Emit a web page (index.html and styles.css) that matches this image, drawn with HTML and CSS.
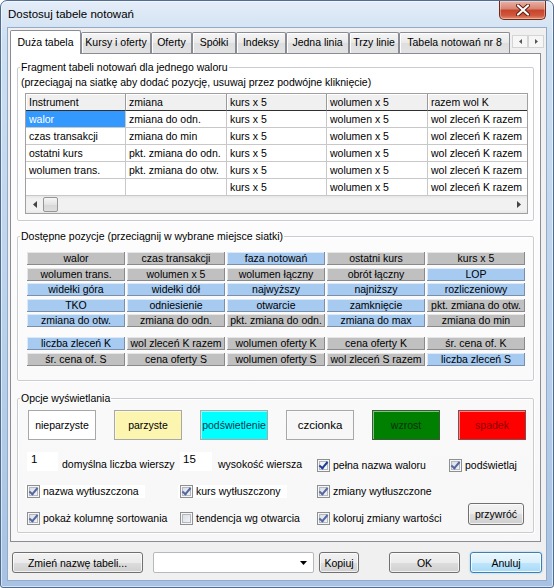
FILE: index.html
```html
<!DOCTYPE html>
<html lang="pl">
<head>
    <meta charset="UTF-8">
    <title>Dostosuj tabele notowań</title>
    <link rel="stylesheet" href="styles.css">
</head>
<body>
<div class="window">
    <div class="titlebar">
        <span class="title">Dostosuj tabele notowań</span>
        <div class="close-btn">
            <svg width="14" height="12" viewBox="0 0 14 12">
                <path d="M2 1.5 L12 10.5 M12 1.5 L2 10.5" stroke="#5a1a10" stroke-width="4" stroke-linecap="round"/>
                <path d="M2 1.5 L12 10.5 M12 1.5 L2 10.5" stroke="#fff" stroke-width="2.2" stroke-linecap="round"/>
            </svg>
        </div>
    </div>

    <div class="client">
        <div class="tabs">
            <div class="tab active">Duża tabela</div>
            <div class="tab">Kursy i oferty</div>
            <div class="tab">Oferty</div>
            <div class="tab">Spółki</div>
            <div class="tab">Indeksy</div>
            <div class="tab">Jedna linia</div>
            <div class="tab">Trzy linie</div>
            <div class="tab">Tabela notowań nr 8</div>
            <div class="tab-arrows">
                <span class="tab-arrow"><svg width="3" height="5" viewBox="0 0 3 5"><path d="M3 0 L0 2.5 L3 5Z" fill="#555"/></svg></span>
                <span class="tab-arrow"><svg width="3" height="5" viewBox="0 0 3 5"><path d="M0 0 L3 2.5 L0 5Z" fill="#555"/></svg></span>
            </div>
        </div>

        <div class="panel">
            <!-- podgląd tabeli -->
            <fieldset class="group">
                <legend>Fragment tabeli notowań dla jednego waloru</legend>
                <div class="group-body body-fragment">
                    <p class="hint">(przeciągaj na siatkę aby dodać pozycję, usuwaj przez podwójne kliknięcie)</p>
                    <div class="grid">
                        <div class="grid-row grid-head">
                            <div>Instrument</div><div>zmiana</div><div>kurs x 5</div><div>wolumen x 5</div><div>razem wol K</div>
                        </div>
                        <div class="grid-row">
                            <div class="sel">walor</div><div>zmiana do odn.</div><div>kurs x 5</div><div>wolumen x 5</div><div>wol zleceń K razem</div>
                        </div>
                        <div class="grid-row">
                            <div>czas transakcji</div><div>zmiana do min</div><div>kurs x 5</div><div>wolumen x 5</div><div>wol zleceń K razem</div>
                        </div>
                        <div class="grid-row">
                            <div>ostatni kurs</div><div>pkt. zmiana do odn.</div><div>kurs x 5</div><div>wolumen x 5</div><div>wol zleceń K razem</div>
                        </div>
                        <div class="grid-row">
                            <div>wolumen trans.</div><div>pkt. zmiana do otw.</div><div>kurs x 5</div><div>wolumen x 5</div><div>wol zleceń K razem</div>
                        </div>
                        <div class="grid-row">
                            <div></div><div></div><div>kurs x 5</div><div>wolumen x 5</div><div>wol zleceń K razem</div>
                        </div>
                        <div class="hscroll">
                            <span class="sb-arrow"><svg width="4" height="7" viewBox="0 0 4 7"><path d="M4 0 L0 3.5 L4 7Z" fill="#444"/></svg></span>
                            <span class="sb-thumb"></span>
                            <span class="sb-track"></span>
                            <span class="sb-arrow"><svg width="4" height="7" viewBox="0 0 4 7"><path d="M0 0 L4 3.5 L0 7Z" fill="#444"/></svg></span>
                        </div>
                    </div>
                </div>
            </fieldset>

            <!-- dostępne pozycje -->
            <fieldset class="group group-fields">
                <legend>Dostępne pozycje (przeciągnij w wybrane miejsce siatki)</legend>
                <div class="group-body body-fields">
                    <div class="fields">
                        <div class="field">walor</div>
                        <div class="field">czas transakcji</div>
                        <div class="field blue">faza notowań</div>
                        <div class="field">ostatni kurs</div>
                        <div class="field">kurs x 5</div>

                        <div class="field">wolumen trans.</div>
                        <div class="field">wolumen x 5</div>
                        <div class="field">wolumen łączny</div>
                        <div class="field">obrót łączny</div>
                        <div class="field blue">LOP</div>

                        <div class="field blue">widełki góra</div>
                        <div class="field blue">widełki dół</div>
                        <div class="field blue">najwyższy</div>
                        <div class="field blue">najniższy</div>
                        <div class="field blue">rozliczeniowy</div>

                        <div class="field blue">TKO</div>
                        <div class="field blue">odniesienie</div>
                        <div class="field blue">otwarcie</div>
                        <div class="field blue">zamknięcie</div>
                        <div class="field">pkt. zmiana do otw.</div>

                        <div class="field blue">zmiana do otw.</div>
                        <div class="field">zmiana do odn.</div>
                        <div class="field">pkt. zmiana do odn.</div>
                        <div class="field blue">zmiana do max</div>
                        <div class="field">zmiana do min</div>
                    </div>
                    <div class="fields fields-orders">
                        <div class="field blue">liczba zleceń K</div>
                        <div class="field">wol zleceń K razem</div>
                        <div class="field">wolumen oferty K</div>
                        <div class="field">cena oferty K</div>
                        <div class="field">śr. cena of. K</div>

                        <div class="field">śr. cena of. S</div>
                        <div class="field">cena oferty S</div>
                        <div class="field">wolumen oferty S</div>
                        <div class="field">wol zleceń S razem</div>
                        <div class="field blue">liczba zleceń S</div>
                    </div>
                </div>
            </fieldset>

            <!-- opcje -->
            <fieldset class="group group-options">
                <legend>Opcje wyświetlania</legend>
                <div class="group-body body-options">
                    <div class="swatches">
                        <div class="swatch sw-odd">nieparzyste</div>
                        <div class="swatch sw-even">parzyste</div>
                        <div class="swatch sw-hl">podświetlenie</div>
                        <div class="swatch sw-font">czcionka</div>
                        <div class="swatch sw-up">wzrost</div>
                        <div class="swatch sw-down">spadek</div>
                    </div>
                    <div class="options">
                        <div class="opt"><span class="num-input">1</span><span class="opt-label">domyślna liczba wierszy</span></div>
                        <div class="opt"><span class="num-input num-wide">15</span><span class="opt-label">wysokość wiersza</span></div>
                        <label class="opt opt-low"><span class="cb checked strong"></span>pełna nazwa waloru</label>
                        <label class="opt opt-low"><span class="cb checked"></span>podświetlaj</label>

                        <label class="opt lit"><span class="cb checked"></span>nazwa wytłuszczona</label>
                        <label class="opt lit"><span class="cb checked"></span>kurs wytłuszczony</label>
                        <label class="opt"><span class="cb checked"></span>zmiany wytłuszczone</label>
                        <button class="btn btn-restore">przywróć</button>

                        <label class="opt"><span class="cb checked"></span>pokaż kolumnę sortowania</label>
                        <label class="opt"><span class="cb"></span>tendencja wg otwarcia</label>
                        <label class="opt"><span class="cb checked"></span>koloruj zmiany wartości</label>
                    </div>
                </div>
            </fieldset>
        </div>

        <div class="footer">
            <button class="btn btn-rename">Zmień nazwę tabeli...</button>
            <div class="combo">
                <svg width="7" height="4" viewBox="0 0 7 4"><path d="M0 0 L7 0 L3.5 4Z" fill="#000"/></svg>
            </div>
            <button class="btn btn-copy">Kopiuj</button>
            <button class="btn btn-ok">OK</button>
            <button class="btn btn-cancel">Anuluj</button>
        </div>
    </div>
</div>
</body>
</html>
```

FILE: styles.css
```css
* {
    box-sizing: border-box;
}
body {
    margin: 0;
    background: #fff;
    font-family: "Liberation Sans", Arial, sans-serif;
    font-size: 10.5px;
    color: #000;
}
.window {
    width: 554px;
    height: 588px;
    border: 1px solid #4f6d90;
    border-radius: 7px 7px 3px 3px;
    background: linear-gradient(#e4edf8, #cddff1 40px, #bcd3ec 300px, #a7c2e3);
    box-shadow: inset 0 0 0 1px rgba(255,255,255,0.55);
}
.titlebar {
    height: 27px;
    display: flex;
    align-items: flex-start;
}
.title {
    font-size: 11.5px;
    line-height: 14px;
    padding: 6px 0 0 7px;
}
.close-btn {
    margin-left: auto;
    margin-right: 7px;
    width: 47px;
    height: 19px;
    border: 1px solid #6e2a1d;
    border-top: none;
    border-radius: 0 0 5px 5px;
    background: linear-gradient(#eab2a5, #d8826f 45%, #c6442b 50%, #d0573c 80%, #e28f70);
    box-shadow: inset 0 0 0 1px rgba(255,255,255,0.35);
    display: flex;
    align-items: center;
    justify-content: center;
}
.client {
    height: 552px;
    margin: 0 7px;
    padding: 2px 0 0 2px;
    background: #f0f0f0;
    box-shadow: 0 0 0 1px #93abc9;
}

/* zakładki */
.tabs {
    display: flex;
    align-items: flex-end;
    height: 23px;
    position: relative;
    z-index: 1;
}
.tab {
    height: 21px;
    line-height: 19px;
    text-align: center;
    white-space: nowrap;
    border: 1px solid #898c95;
    border-bottom: none;
    border-radius: 2px 2px 0 0;
    background: linear-gradient(#f5f5f5, #e9e9e9 50%, #dedede 51%, #e2e2e2);
    box-shadow: inset 1px 1px 0 #fff;
}
.tab:nth-child(1) { width: 71px; }
.tab:nth-child(2) { width: 70px; }
.tab:nth-child(3) { width: 41px; }
.tab:nth-child(4) { width: 44px; }
.tab:nth-child(5) { width: 50px; }
.tab:nth-child(6) { width: 63px; }
.tab:nth-child(7) { width: 50px; }
.tab:nth-child(8) { width: 111px; }
.tab.active {
    height: 24px;
    line-height: 22px;
    margin-bottom: -1px;
    background: #fff;
    box-shadow: none;
}
.tab-arrows {
    align-self: flex-start;
    margin: 5px 0 0 2px;
    display: flex;
}
.tab-arrow {
    width: 16px;
    height: 13px;
    border: 1px solid #d4d4d4;
    background: #f6f6f6;
    display: flex;
    align-items: center;
    justify-content: center;
}

.panel {
    width: 531px;
    height: 489px;
    border: 1px solid #898c95;
    background: linear-gradient(#ffffff, #f7f7f7);
    padding: 7px 6px 0 6px;
}

/* ramki grup */
.group {
    margin: 0;
    padding: 0;
    min-width: 0;
    border: 1px solid #c9cdd2;
    border-radius: 2px;
    box-shadow: 1px 1px 0 #fff, inset 1px 1px 0 #fff;
}
.group legend {
    margin-left: 2px;
    padding: 0 1px;
    line-height: 13px;
}
.group-fields {
    margin-top: 9px;
}
.group-options {
    margin-top: 11px;
}
.body-fragment {
    padding: 2px 5px 6px 3px;
}
.hint {
    margin: 0;
    line-height: 13px;
}

/* siatka */
.grid {
    margin: 4px 0 0 4px;
    width: 503px;
    border: 1px solid #a0a0a0;
    background: #fff;
}
.grid-row {
    display: grid;
    grid-template-columns: 100px 101px 100px 101px 99px;
    height: 17px;
}
.grid-row div {
    line-height: 16px;
    padding-left: 3px;
    white-space: nowrap;
    overflow: hidden;
    border-right: 1px solid #c8c8c8;
    border-bottom: 1px solid #c8c8c8;
}
.grid-row div:last-child {
    border-right: none;
}
.grid-head div {
    background: #f0f0f0;
    border-right-color: #9a9a9a;
    border-bottom-color: #303030;
    box-shadow: inset 1px 1px 0 #fff;
}
.grid-row .sel {
    background: #3399ff;
    color: #fff;
}
.hscroll {
    height: 17px;
    display: flex;
    align-items: center;
    background: linear-gradient(#e6e6e6, #f1f1f1 3px, #f1f1f1 14px, #e6e6e6);
}
.sb-arrow {
    width: 17px;
    height: 17px;
    display: flex;
    align-items: center;
    justify-content: center;
}
.sb-thumb {
    width: 15px;
    height: 15px;
    border: 1px solid #969696;
    border-radius: 2px;
    background: linear-gradient(#f6f6f6, #e3e3e3 50%, #d6d6d6 51%, #dedede);
}
.sb-track {
    flex: 1;
}

/* dostępne pozycje */
.body-fields {
    padding: 9px 0 14px 9px;
}
.fields {
    display: grid;
    grid-template-columns: repeat(5, 98px);
    grid-auto-rows: 13px;
    column-gap: 2px;
    row-gap: 2.5px;
}
.fields-orders {
    margin-top: 10px;
}
.field {
    background: #c0c0c0;
    text-align: center;
    line-height: 13px;
    white-space: nowrap;
    overflow: hidden;
    box-shadow: inset -1px -1px 0 #8a8a8a, inset 1px 1px 0 #e6e6e6;
}
.field.blue {
    background: #a6caf0;
    box-shadow: inset -1px -1px 0 #7d8fa8, inset 1px 1px 0 #dbe9f8;
}

/* opcje */
.body-options {
    padding: 5px 0 7px 9px;
}
.swatches {
    display: flex;
    gap: 18px;
    margin-left: 1px;
}
.swatch {
    width: 68px;
    height: 30px;
    border: 1px solid #a8a8a8;
    box-shadow: inset 1px 1px 0 rgba(255,255,255,0.5);
    display: flex;
    align-items: center;
    justify-content: center;
    white-space: nowrap;
}
.sw-odd { background: #fff; }
.sw-even { background: #fcf5b0; }
.sw-hl { background: #00ffff; color: #0b3550; }
.sw-font { background: #f7f7f7; font-size: 11.5px; }
.sw-up { background: #008000; color: #0d2f0d; border-color: #3a5a3a; }
.sw-down { background: #ff0000; color: #8a0000; border-color: #8a4a4a; }

.options {
    margin-top: 12px;
    display: grid;
    grid-template-columns: 153px 137px 132px 76px;
    grid-template-rows: 20px 13px 13px;
    row-gap: 13.5px;
    align-items: center;
}
.opt {
    display: flex;
    align-items: center;
    line-height: 13px;
    white-space: nowrap;
}
.opt-low {
    align-self: end;
}
.opt-label {
    align-self: flex-end;
}
.num-input {
    width: 31px;
    height: 19px;
    margin-right: 4px;
    align-self: flex-start;
    padding: 1px 0 0 4px;
    background: #fff;
    font-size: 11.5px;
}
.num-wide {
    width: 32px;
    margin-right: 6px;
    padding-left: 3px;
}
.lit {
    justify-self: start;
    margin-left: -2px;
    padding: 0 6px 0 2px;
    background: #fff;
}
.cb {
    position: relative;
    flex: none;
    width: 13px;
    height: 13px;
    margin-right: 3px;
    border: 1px solid #8e8f8f;
    background: linear-gradient(135deg, #d6dae2, #f6f7f9);
    box-shadow: inset 0 0 0 1px #f6f6f6, inset 0 0 0 2px #b3b8c0;
}
.cb.checked::after {
    content: "";
    position: absolute;
    left: 3px;
    top: 0px;
    width: 3px;
    height: 7px;
    border: solid #5467a0;
    border-width: 0 2px 2px 0;
    transform: rotate(40deg);
}
.cb.strong {
    background: linear-gradient(135deg, #e9edf4, #ffffff);
}
.cb.strong::after {
    border-color: #1f3d94;
}

/* przyciski */
.btn {
    font: inherit;
    color: #000;
    padding: 0;
    border: 1px solid #707070;
    border-radius: 3px;
    background: linear-gradient(#f2f2f2, #ebebeb 50%, #dddddd 51%, #cfcfcf);
    box-shadow: inset 0 0 0 1px rgba(255,255,255,0.7);
}
.btn-restore {
    grid-column: 4;
    grid-row: 2 / 4;
    justify-self: end;
    align-self: end;
    width: 56px;
    height: 22px;
    margin: 0 1px 0 0;
}
.footer {
    margin: 10px 0 0 2px;
    display: flex;
    align-items: center;
}
.footer .btn {
    height: 21px;
}
.btn-rename {
    width: 131px;
}
.combo {
    width: 161px;
    height: 21px;
    margin-left: 10px;
    border: 1px solid #b5bac2;
    border-radius: 2px;
    background: #fff;
    display: flex;
    align-items: center;
    justify-content: flex-end;
    padding-right: 6px;
}
.btn-copy {
    width: 40px;
    margin-left: 5px;
}
.btn-ok {
    width: 71px;
    margin-left: 30px;
}
.btn-cancel {
    width: 72px;
    margin-left: 10px;
    border-color: #3c7fb1;
    background: linear-gradient(#eaf6fd, #d9f0fc 50%, #bee6fd 51%, #a7d9f5);
    box-shadow: inset 0 0 0 1px rgba(255,255,255,0.8), 0 0 2px #7fc6f0;
}
```
